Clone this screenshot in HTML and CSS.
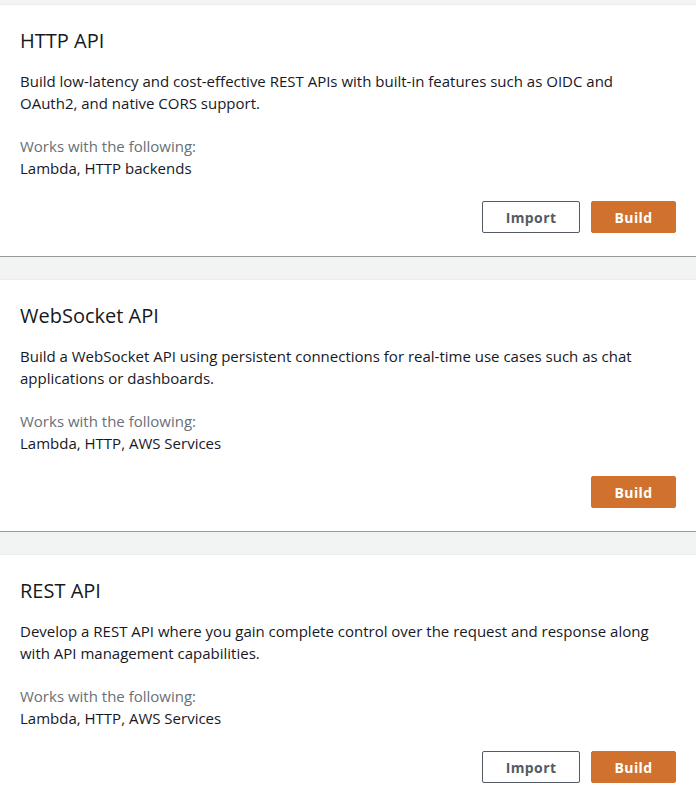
FILE: index.html
```html
<!DOCTYPE html>
<html lang="en">
<head>
  <meta charset="UTF-8">
  <meta name="viewport" content="width=device-width, initial-scale=1.0">
  <title>Choose an API type</title>
  <link rel="stylesheet" href="styles.css">
</head>
<body>
  <div class="lista">
    <div class="card">
      <h2 class="titolo">HTTP API</h2>
      <p class="descrizione stretta">Build low-latency and cost-effective REST APIs with built-in features such as OIDC and OAuth2, and native CORS support.</p>
      <div class="compatibile">
        <span class="etichetta">Works with the following:</span>
        <span class="valore">Lambda, HTTP backends</span>
      </div>
      <div class="azioni">
        <button class="btn btn-normale">Import</button>
        <button class="btn btn-primario">Build</button>
      </div>
    </div>

    <div class="card">
      <h2 class="titolo">WebSocket API</h2>
      <p class="descrizione">Build a WebSocket API using persistent connections for real-time use cases such as chat applications or dashboards.</p>
      <div class="compatibile">
        <span class="etichetta">Works with the following:</span>
        <span class="valore">Lambda, HTTP, AWS Services</span>
      </div>
      <div class="azioni">
        <button class="btn btn-primario">Build</button>
      </div>
    </div>

    <div class="card">
      <h2 class="titolo">REST API</h2>
      <p class="descrizione">Develop a REST API where you gain complete control over the request and response along with API management capabilities.</p>
      <div class="compatibile">
        <span class="etichetta">Works with the following:</span>
        <span class="valore">Lambda, HTTP, AWS Services</span>
      </div>
      <div class="azioni">
        <button class="btn btn-normale">Import</button>
        <button class="btn btn-primario">Build</button>
      </div>
    </div>
  </div>
</body>
</html>
```

FILE: styles.css
```css
body {
  margin: 0;
  background-color: #f2f3f3;
  font-family: "Open Sans", "Noto Sans", Arial, sans-serif;
  color: #16191f;
}
.lista {
  padding-top: 4px;
  display: flex;
  flex-direction: column;
  gap: 22px;
}
.card {
  background-color: #ffffff;
  border-top: 1px solid #eaeded;
  border-bottom: 1px solid #969a9e;
  padding: 19px 20px 23px;
}
.titolo {
  margin: 4px 0 0;
  font-size: 20px;
  font-weight: normal;
  line-height: 26px;
}
.descrizione {
  margin: 16px 0 0;
  font-size: 15px;
  line-height: 22px;
}
.stretta {
  max-width: 600px;
}
.compatibile {
  margin-top: 21px;
  display: flex;
  flex-direction: column;
  font-size: 15px;
  line-height: 22px;
}
.etichetta {
  color: #687078;
}
.azioni {
  margin-top: 22px;
  display: flex;
  justify-content: flex-end;
  gap: 11px;
}
.btn {
  height: 32px;
  border-radius: 2px;
  font-family: inherit;
  font-size: 14px;
  font-weight: bold;
  letter-spacing: 0.4px;
  cursor: pointer;
}
.btn-normale {
  width: 98px;
  background-color: #ffffff;
  border: 1px solid #545b64;
  color: #545b64;
}
.btn-primario {
  width: 85px;
  background-color: #d0722e;
  border: 1px solid #d0722e;
  color: #ffffff;
}
```
